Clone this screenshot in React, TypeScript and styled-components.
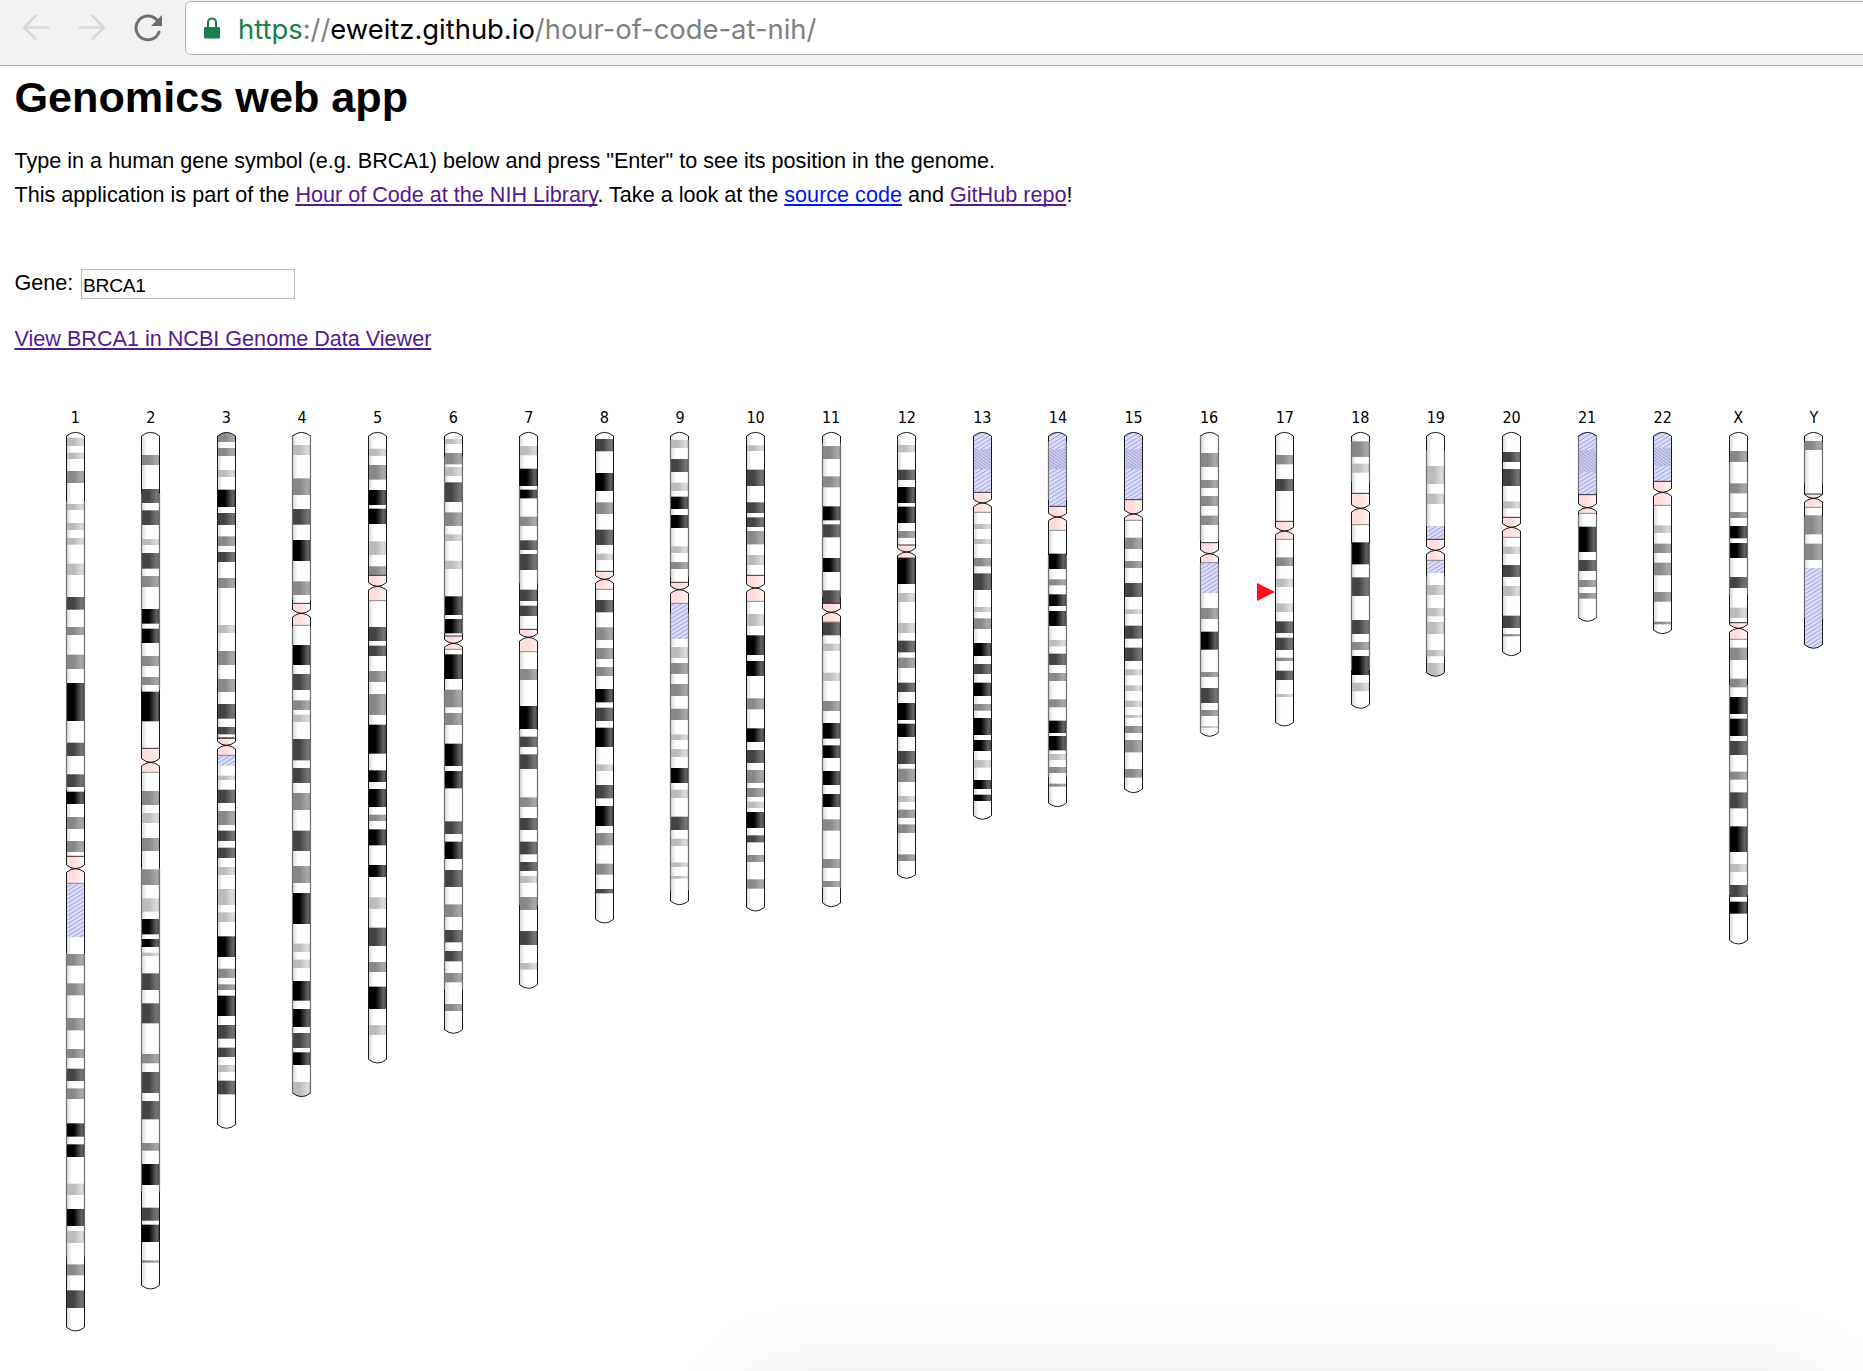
import React, { useState } from 'react';
import styled, { createGlobalStyle } from 'styled-components';

const GlobalStyle = createGlobalStyle`
  html, body { margin: 0; padding: 0; background: #fff; }
  body { font-family: "Liberation Sans", Arial, Helvetica, sans-serif; color: #000; }
`;

const Frame = styled.div`
  position: relative;
  width: 1863px;
  height: 1371px;
  overflow: hidden;
  background: #fff;
`;

const Toolbar = styled.header`
  display: flex;
  align-items: flex-start;
  box-sizing: border-box;
  height: 66px;
  padding: 1px 0 0 22px;
  background: #f1f1f1;
  border-bottom: 1px solid #b2b2b2;
  overflow: hidden;
`;

const NavButton = styled.span<{ $tone: string }>`
  flex: none;
  width: 28px;
  height: 28px;
  margin: 13px 28px 0 0;
  color: ${(p) => p.$tone};
  svg { display: block; }
`;

const Omnibox = styled.div`
  display: flex;
  flex: 1;
  align-items: center;
  box-sizing: border-box;
  height: 54px;
  margin: 0 -10px 0 -5px;
  padding-left: 18px;
  border: 1px solid #b4b4b4;
  border-radius: 6px;
  background: #fff;
`;

const LockIcon = styled.svg`
  flex: none;
  margin-right: 18px;
`;

const Url = styled.span`
  padding-top: 1px;
  font: 27.4px/52px Inter, Roboto, sans-serif;
  white-space: pre;
  color: #808080;
`;

const UrlPart = styled.span<{ $color: string }>`
  color: ${(p) => p.$color};
`;

const Main = styled.main`
  padding: 9px 0 0 14.5px;
`;

const Title = styled.h1`
  margin: 0 0 25px;
  font-size: 43.2px;
  line-height: 44px;
  font-weight: bold;
`;

const Intro = styled.p`
  margin: 0 0 57px;
  font-size: 21.6px;
  line-height: 34px;
  white-space: nowrap;
`;

const Link = styled.a<{ $fresh?: boolean }>`
  color: ${(p) => (p.$fresh ? '#0018f0' : '#551a8b')};
  text-decoration: underline;
  text-decoration-thickness: 2px;
  text-underline-offset: 2px;
  text-decoration-skip-ink: none;
`;

const GeneRow = styled.div`
  display: flex;
  height: 30px;
  margin-bottom: 23px;
  font-size: 21.6px;
`;

const GeneLabel = styled.label`
  width: 66.5px;
  line-height: 28px;
`;

const GeneInput = styled.input`
  box-sizing: border-box;
  width: 214px;
  height: 30px;
  padding: 3px 1px 0;
  border: 1px solid #bbb;
  outline: none;
  background: #fff;
  color: #000;
  font: 19.2px "Liberation Sans", Arial, sans-serif;
  letter-spacing: -0.25px;
`;

const ViewerLine = styled.div`
  margin-bottom: 52px;
  font-size: 21.6px;
  line-height: 34px;
`;

const Ideogram = styled.section`
  display: grid;
  grid-template-columns: repeat(24, 75.6px);
  justify-items: center;
  align-items: start;
  margin-left: 22.9px;
`;

const Column = styled.div`
  position: relative;
  display: flex;
  flex-direction: column;
  align-items: center;
`;

const ChromosomeName = styled.span`
  margin-bottom: 2px;
  font: 16px/20px "DejaVu Sans Condensed", "DejaVu Sans", sans-serif;
  font-stretch: condensed;
  letter-spacing: -0.1px;
`;

const Drawing = styled.svg`
  display: block;
  overflow: visible;
`;

const Marker = styled.span`
  position: absolute;
  top: 175px;
  right: 100%;
  border-style: solid;
  border-width: 9px 0 9px 18px;
  border-color: transparent transparent transparent #ff0f1b;
`;

const WindowShadow = styled.div`
  position: absolute;
  left: 760px;
  top: 1392px;
  width: 1050px;
  height: 200px;
  box-shadow: 0 0 90px 10px rgba(0, 0, 0, 0.11);
`;

/* Vertical lengths are in thirds of a pixel; each chromosome starts at y = 96. */
const UNIT = 3;
const TOP = 96;
const ORIGIN = 90;

type Chromosome = {
  name: string;
  bands: string;
  centromere: [number, number, number];
  end: number;
  soft?: [number, number][];
};

/* Band codes: l, m, d, k = light to black stain; v = variable region; s = stalk. */
const CHROMOSOMES: Chromosome[] = [
  {
    name: '1',
    bands:
      'l113-138 l158-177 m213-249 l312-330 l369-390 l414-434 l491-525 d591-629 m681-705 m764-807 k849-963 d1028-1068 d1123-1161 k1175-1212 m1251-1287 m1323-1356 v1451-1612 m1662-1697 m1750-1786 m1854-1891 m1947-1974 d2006-2043 m2065-2097 k2170-2210 k2233-2271 l2351-2385 k2427-2478 l2493-2529 m2593-2626 d2671-2724',
    centromere: [1369, 1406, 1450],
    end: 2794,
    soft: [[305, 1170], [1660, 2570]],
  },
  {
    name: '2',
    bands:
      'm165-195 d267-309 d331-375 l417-435 d459-506 m528-561 k627-671 k686-729 m768-798 m831-855 k875-964 m1173-1215 l1239-1269 m1314-1353 m1408-1455 l1495-1535 k1557-1603 k1617-1641 l1658-1668 d1720-1770 d1810-1870 m1962-1990 d2016-2079 d2103-2158 m2229-2252 k2292-2355 d2423-2462 k2474-2526 m2581-2588',
    centromere: [1045, 1087, 1117],
    end: 2668,
    soft: [[280, 870], [1405, 2375]],
  },
  {
    name: '3',
    bands:
      'm96-126 m144-168 l210-231 k269-321 d339-375 m409-438 d456-486 m534-564 l675-699 m753-795 m837-876 d912-956 d981-1003 m1011-1015 v1066-1097 l1127-1140 d1169-1209 m1233-1275 d1292-1323 d1343-1374 l1401-1425 l1467-1515 l1537-1566 k1609-1671 m1706-1734 m1753-1770 k1787-1848 d1875-1916 d1943-1971 l1995-2016 d2042-2083',
    centromere: [1015, 1036, 1066],
    end: 2186,
  },
  {
    name: '4',
    bands:
      'l135-165 m235-285 d327-374 k420-483 m544-585 k735-795 d822-870 m901-930 l944-966 d1017-1081 d1104-1149 m1179-1230 d1292-1353 m1398-1449 k1479-1572 l1631-1656 l1679-1704 k1743-1802 k1827-1881 d1899-1944 k1957-1995 l2046-2091',
    centromere: [610, 640, 676],
    end: 2091,
    soft: [[106, 600], [680, 2080]],
  },
  {
    name: '5',
    bands:
      'l146-168 m195-239 k270-315 k326-372 l424-465 m499-526 d681-723 d737-768 m813-846 m882-945 k974-1061 k1111-1146 k1167-1221 m1244-1263 k1288-1336 k1395-1431 l1492-1527 d1583-1638 m1686-1716 k1760-1827 l1875-1905',
    centromere: [526, 559, 602],
    end: 1990,
  },
  {
    name: '6',
    bands:
      'l117-132 m159-193 l201-228 d247-306 m337-378 l403-423 l482-507 k589-645 k657-700 k763-837 m869-922 m939-975 k1031-1098 k1113-1165 d1264-1302 k1325-1377 d1410-1461 m1513-1551 d1590-1627 d1653-1684 m1719-1747 m1812-1833',
    centromere: [708, 730, 748],
    end: 1901,
    soft: [[170, 700], [870, 1770]],
  },
  {
    name: '7',
    bands:
      'l138-166 k206-258 k269-295 m350-378 d421-450 d462-510 d569-603 d617-648 m807-840 k918-987 d1010-1041 d1063-1107 m1192-1221 d1254-1290 d1325-1363 d1386-1413 l1428-1449 m1491-1530 d1593-1635 l1689-1709',
    centromere: [688, 712, 755],
    end: 1766,
    soft: [[258, 550], [990, 1515]],
  },
  {
    name: '8',
    bands:
      'd117-154 k219-273 m307-342 d389-435 l461-480 d600-637 m682-720 m744-777 m801-828 k867-907 d923-963 k983-1041 l1093-1113 d1155-1195 k1218-1278 m1299-1336 m1391-1424 d1467-1480',
    centromere: [514, 538, 568],
    end: 1570,
  },
  {
    name: '9',
    bands:
      'l119-144 d177-216 l248-273 k290-327 k345-384 l439-459 m486-507 v611-717 l741-774 m789-822 m852-888 m926-960 l1003-1020 l1047-1071 k1104-1149 l1169-1194 d1250-1290 l1316-1338 l1387-1401 l1428-1436',
    centromere: [547, 569, 610],
    end: 1515,
    soft: [[120, 530], [640, 1470]],
  },
  {
    name: '10',
    bands:
      'l136-153 d209-258 d307-339 d352-381 m393-433 l465-495 l642-678 k706-765 k783-828 m895-928 k985-1026 d1050-1089 m1110-1149 m1164-1191 l1205-1224 k1236-1284 d1306-1327 m1365-1386 m1438-1466',
    centromere: [526, 564, 604],
    end: 1534,
  },
  {
    name: '11',
    bands:
      'm138-177 m229-262 k319-361 d373-412 k474-516 d571-610 d667-706 l731-753 l818-843 m903-933 k969-1016 k1036-1074 k1113-1155 k1182-1221 m1258-1292 m1377-1404 m1443-1461',
    centromere: [610, 637, 666],
    end: 1521,
    soft: [[130, 590], [710, 1465]],
  },
  {
    name: '12',
    bands:
      'l135-157 d209-240 k261-309 k320-369 m393-414 k474-552 l579-606 l669-699 d722-757 m773-804 d848-876 k909-960 k971-1011 d1053-1092 m1106-1146 l1188-1206 m1229-1254 m1273-1299 m1363-1383',
    centromere: [435, 456, 473],
    end: 1436,
  },
  {
    name: '13',
    bands:
      'v96-147 s147-207 v207-277 l372-387 l417-432 m474-499 d520-570 l621-636 m655-687 k729-768 d792-822 k848-888 m912-932 k954-1005 k1020-1053 l1080-1103 k1140-1167 k1184-1203',
    centromere: [277, 309, 337],
    end: 1259,
  },
  {
    name: '14',
    bands:
      'v96-147 s147-207 v207-318 k461-507 m538-556 k583-618 k633-678 l720-739 d761-795 m819-843 m898-922 k962-999 k1008-1051 l1062-1080 m1101-1119 m1151-1160',
    centromere: [319, 351, 391],
    end: 1221,
    soft: [[125, 300], [465, 1130]],
  },
  {
    name: '15',
    bands:
      'v96-147 s147-207 v207-298 m413-447 m483-504 d549-591 l628-642 d677-716 d743-783 l808-826 l856-873 l902-921 l945-954 m978-999 m1020-1057 m1107-1133',
    centromere: [299, 342, 361],
    end: 1179,
  },
  {
    name: '16',
    bands:
      'm159-201 m240-264 m288-318 m347-375 v488-579 m624-657 k695-749 m816-831 d864-909 m930-948 l978-984',
    centromere: [428, 461, 488],
    end: 1010,
    soft: [[106, 420], [490, 998]],
  },
  {
    name: '17',
    bands:
      'm165-193 d237-273 m472-498 l536-561 l610-636 d664-699 d713-750 m773-783 d812-840 l882-891',
    centromere: [364, 393, 418],
    end: 979,
  },
  {
    name: '18',
    bands: 'm124-171 l191-218 k427-493 d532-588 d660-702 m726-750 k768-825 l848-874',
    centromere: [280, 325, 374],
    end: 926,
    soft: [[125, 245], [430, 810]],
  },
  {
    name: '19',
    bands:
      'l198-252 l281-312 v378-418 v482-519 l555-585 l624-649 l666-702 l750-769 l789-830',
    centromere: [418, 451, 481],
    end: 830,
    soft: [[153, 378], [530, 770]],
  },
  {
    name: '20',
    bands: 'd156-186 d207-258 l304-325 l440-462 d495-531 l558-588 d647-684 m702-709',
    centromere: [352, 382, 412],
    end: 768,
  },
  {
    name: '21',
    bands: 'v96-150 s150-216 v216-283 k380-456 d480-513 m540-561 m579-596',
    centromere: [284, 323, 340],
    end: 665,
    soft: [[106, 280], [345, 652]],
  },
  {
    name: '22',
    bands: 'v96-142 s142-198 v198-244 l376-399 m431-459 m488-526 m576-605 m665-673',
    centromere: [244, 277, 316],
    end: 702,
  },
  {
    name: 'X',
    bands:
      'm153-186 m250-280 m336-354 k378-415 k429-474 d531-564 l623-654 m743-780 m836-862 k891-942 k956-1008 d1023-1065 m1115-1139 d1177-1225 k1279-1356 l1392-1416 d1455-1491 k1505-1541',
    centromere: [668, 685, 718],
    end: 1633,
    soft: [[186, 585], [855, 1485]],
  },
  {
    name: 'Y',
    bands: 'm123-150 m346-403 m431-480 v504-746',
    centromere: [282, 295, 322],
    end: 746,
    soft: [[125, 250], [350, 655]],
  },
];

const STAINS: Record<string, [string, string, string]> = {
  l: ['#c8c8c8', '#dddddd', '#bbbbbb'],
  m: ['#999999', '#aaaaaa', '#888888'],
  d: ['#666666', '#777777', '#444444'],
  k: ['#444444', '#666666', '#000000'],
  c: ['#ffeeee', '#ffeeee', '#ffdddd'],
};

const PaintDefs = styled.svg`
  position: absolute;
`;

const SharedPaints = () => (
  <PaintDefs width="0" height="0" aria-hidden="true">
    <defs>
      {Object.entries(STAINS).map(([code, [edge, shine, base]]) => (
        <linearGradient key={code} id={`band-${code}`} x1="1" y1="0" x2="0" y2="0">
          <stop offset="5%" stopColor={edge} />
          <stop offset="15%" stopColor={shine} />
          <stop offset="60%" stopColor={base} />
        </linearGradient>
      ))}
      <linearGradient id="band-gap" x1="1" y1="0" x2="0" y2="0">
        <stop offset="0%" stopColor="#f0f0f0" />
        <stop offset="8%" stopColor="#ffffff" />
        <stop offset="70%" stopColor="#ffffff" />
        <stop offset="95%" stopColor="#dddddd" />
      </linearGradient>
      <pattern id="band-v" width="10.5" height="10.5" patternUnits="userSpaceOnUse" patternTransform="rotate(-32)">
        <rect width="10.5" height="10.5" fill="#ddddff" />
        <rect width="10.5" height="3" fill="#a6a6da" />
      </pattern>
      <pattern id="band-s" width="7.5" height="7.5" patternUnits="userSpaceOnUse" patternTransform="rotate(36)">
        <rect width="7.5" height="7.5" fill="#ccccee" />
        <rect width="7.5" height="2.4" fill="#a0a0cc" />
      </pattern>
    </defs>
  </PaintDefs>
);

const LEFT = 1.5;
const RIGHT = 55.5;
const MID = 28.5;
const CAP = 11;

/* Outline of one arm, rounded at both ends. */
const armPath = (from: number, to: number) =>
  `M${LEFT} ${from + CAP}Q${MID} ${from - CAP} ${RIGHT} ${from + CAP}` +
  `V${to - CAP}Q${MID} ${to + CAP} ${LEFT} ${to - CAP}Z`;

const ChromosomeDrawing = ({ data }: { data: Chromosome }) => {
  const { name, centromere, end, soft = [] } = data;
  const [acenTop, pinch, acenBottom] = centromere;
  const rows = Math.ceil((end + 6 - ORIGIN) / UNIT);
  const bands = data.bands.split(' ').map((entry) => {
    const [from, to] = entry.slice(1).split('-').map(Number);
    return { code: entry[0], from, to };
  });
  const upper = armPath(TOP + 1, pinch);
  const lower = armPath(pinch, end - 1);
  return (
    <Drawing
      width={19}
      height={rows}
      viewBox={`0 ${ORIGIN} 57 ${rows * UNIT}`}
      role="img"
      aria-label={name}
    >
      <clipPath id={`clip-${name}`}>
        <path d={upper} />
        <path d={lower} />
      </clipPath>
      <g clipPath={`url(#clip-${name})`}>
        <rect x={1} y={TOP} width={55} height={end - TOP} fill="url(#band-gap)" />
        {bands.map((b) => (
          <rect key={b.from} x={1} y={b.from} width={55} height={b.to - b.from} fill={`url(#band-${b.code})`} />
        ))}
        <rect x={1} y={acenTop} width={55} height={acenBottom - acenTop} fill="url(#band-c)" />
      </g>
      <path d={upper} fill="none" stroke="#000" strokeWidth={2.7} />
      <path d={lower} fill="none" stroke="#000" strokeWidth={2.7} />
      <path d={`M${LEFT} ${acenTop}H${RIGHT}`} stroke="#111" strokeWidth={2.6} />
      <path d={`M${LEFT} ${acenBottom}H${RIGHT}`} stroke="#555" strokeWidth={2} />
      {soft.map(([from, to]) => (
        <path key={from} d={`M${LEFT} ${from}V${to}M${RIGHT} ${from}V${to}`} stroke="#707070" strokeWidth={3.6} />
      ))}
    </Drawing>
  );
};

const BackArrow = () => (
  <svg width="28" height="28" fill="none" stroke="currentColor" strokeWidth="2.6" strokeLinecap="round">
    <path d="M26 13.5H2M13.5 2L2 13.5L13.5 25" />
  </svg>
);

const ForwardArrow = () => (
  <svg width="28" height="28" fill="none" stroke="currentColor" strokeWidth="2.6" strokeLinecap="round">
    <path d="M2 13.5H26M14.5 2L26 13.5L14.5 25" />
  </svg>
);

const ReloadArrow = () => (
  <svg width="28" height="28" fill="none">
    <path d="M25 18.2A11.9 11.9 0 1 1 22.5 5.6" stroke="currentColor" strokeWidth="2.9" strokeLinecap="round" />
    <path d="M28 1V12H17Z" fill="currentColor" />
  </svg>
);

export default function App() {
  const [gene, setGene] = useState('BRCA1');
  return (
    <Frame>
      <GlobalStyle />
      <SharedPaints />
      <Toolbar>
        <NavButton $tone="#d9d9d9"><BackArrow /></NavButton>
        <NavButton $tone="#d9d9d9"><ForwardArrow /></NavButton>
        <NavButton $tone="#6e6e6e"><ReloadArrow /></NavButton>
        <Omnibox>
          <LockIcon width="16" height="22" viewBox="0 0 16 22">
            <path d="M4 11V5.4a4 4 0 0 1 8 0V11" fill="none" stroke="#188048" strokeWidth="2" />
            <rect x="0" y="10" width="16" height="11.5" rx="1.5" fill="#188048" />
          </LockIcon>
          <Url>
            <UrlPart $color="#188048">https</UrlPart>://
            <UrlPart $color="#000">eweitz.github.io</UrlPart>/hour-of-code-at-nih/
          </Url>
        </Omnibox>
      </Toolbar>
      <Main>
        <Title>Genomics web app</Title>
        <Intro>
          Type in a human gene symbol (e.g. BRCA1) below and press "Enter" to see its position in the genome.
          <br />
          This application is part of the <Link>Hour of Code at the NIH Library</Link>. Take a look at the{' '}
          <Link $fresh>source code</Link> and <Link>GitHub repo</Link>!
        </Intro>
        <GeneRow>
          <GeneLabel htmlFor="gene">Gene:</GeneLabel>
          <GeneInput id="gene" value={gene} spellCheck={false} onChange={(e) => setGene(e.target.value)} />
        </GeneRow>
        <ViewerLine>
          <Link>View BRCA1 in NCBI Genome Data Viewer</Link>
        </ViewerLine>
        <Ideogram>
          {CHROMOSOMES.map((c) => (
            <Column key={c.name}>
              <ChromosomeName>{c.name}</ChromosomeName>
              <ChromosomeDrawing data={c} />
              {c.name === '17' && <Marker />}
            </Column>
          ))}
        </Ideogram>
      </Main>
      <WindowShadow />
    </Frame>
  );
}
